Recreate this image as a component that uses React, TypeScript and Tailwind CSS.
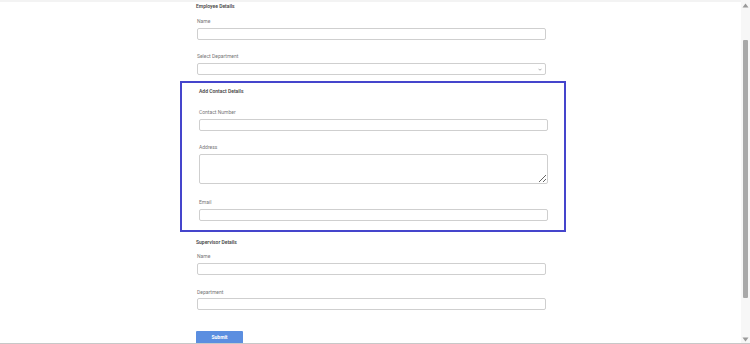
const Field = ({ label, top, gap = "mt-[4px]" }: { label: string; top: string; gap?: string }) => (
    <>
        <div className={`${top} h-[6px] leading-[6px] text-[5px] text-[#777]`}>{label}</div>
        <input className={`${gap} block h-[12px] w-[349px] border border-[#cfcfcf] rounded-[2px] bg-white outline-none`} />
    </>
);

const Heading = ({ text, top }: { text: string; top: string }) => (
    <div className={`${top} h-[6px] leading-[6px] text-[5px] font-semibold text-[#4a4a4a]`}>{text}</div>
);

const App: React.FC = () => {
    return (
        <div className="w-[750px] h-[344px] overflow-hidden bg-white flex flex-col font-['Roboto',sans-serif]">
            <div className="flex h-[343px] shrink-0">
                <div className="flex-1 min-w-0 overflow-hidden">
                    <div className="h-[2px] bg-[#f3f3f3]" />
                    <div className="pl-[196px] flex flex-col">
                        <Heading text="Employee Details" top="mt-[1px]" />
                        <div className="pl-[1px]">
                            <Field label="Name" top="mt-[9px]" />
                            <div className="mt-[13px] h-[6px] leading-[6px] text-[5px] text-[#777]">Select Department</div>
                            <div className="mt-[4px] h-[12px] w-[349px] border border-[#cfcfcf] rounded-[2px] flex items-center justify-end pr-[3px]">
                                <svg width="4" height="3" viewBox="0 0 10 8">
                                    <path d="M1 2 L5 6 L9 2" stroke="#888" strokeWidth="1.8" fill="none" />
                                </svg>
                            </div>
                        </div>

                        <div className="mt-[6px] -ml-[16px] w-[386px] h-[151px] shrink-0 border-2 border-[#4545cc] pl-[17px]">
                            <Heading text="Add Contact Details" top="mt-[5px]" />
                            <Field label="Contact Number" top="mt-[15px]" />
                            <div className="mt-[13px] h-[6px] leading-[6px] text-[5px] text-[#777]">Address</div>
                            <textarea className="mt-[4px] block h-[30px] w-[349px] border border-[#cfcfcf] rounded-[2px] outline-none resize-y" />
                            <Field label="Email" top="mt-[15px]" />
                        </div>

                        <Heading text="Supervisor Details" top="mt-[7px]" />
                        <div className="pl-[1px]">
                            <Field label="Name" top="mt-[8px]" />
                            <Field label="Department" top="mt-[14px]" gap="mt-[3px]" />
                        </div>
                        <button className="mt-[21px] h-[14px] w-[47px] shrink-0 bg-[#5b8ee0] text-white text-[5px] font-bold rounded-[1px]">
                            Submit
                        </button>
                    </div>
                </div>

                {/* scrollbar */}
                <div className="w-[9px] bg-[#f7f7f7] flex flex-col items-center">
                    <svg width="7" height="5" viewBox="0 0 7 5" className="mt-[3px] shrink-0">
                        <path d="M0.5 4.5 L3.5 0.5 L6.5 4.5 Z" fill="#9a9a9a" />
                    </svg>
                    <div className="mt-[32px] w-[5px] h-[258px] shrink-0 bg-[#a9a9a9] rounded-[1px]" />
                    <div className="flex-1" />
                    <svg width="7" height="5" viewBox="0 0 7 5" className="mb-[1px] shrink-0">
                        <path d="M0.5 0.5 L3.5 4.5 L6.5 0.5 Z" fill="#9a9a9a" />
                    </svg>
                </div>
            </div>
            <div className="h-[1px] shrink-0 bg-[#c8c8c8]" />
        </div>
    );
};

export default App;
